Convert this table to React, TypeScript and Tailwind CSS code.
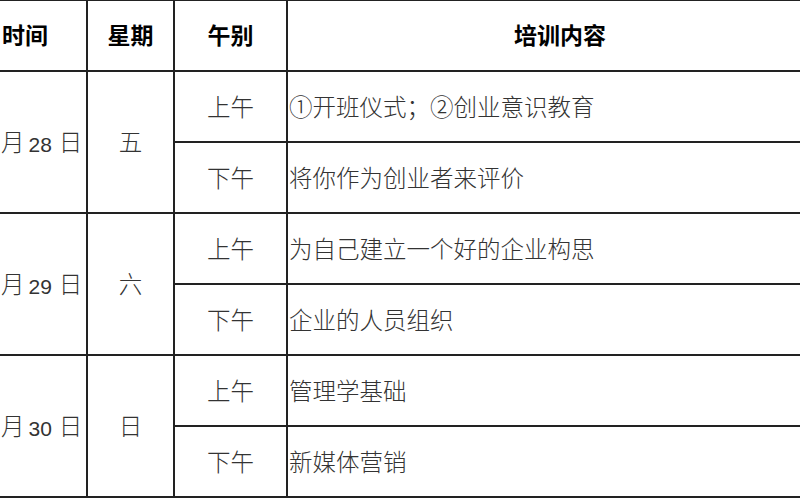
import React from "react";

const body = "text-[23.5px] text-[#333] font-light leading-none pt-[4px]";
const fam = { fontFamily: '"Liberation Sans", "Noto Sans CJK SC", sans-serif' } as React.CSSProperties;

const days = [
  { num: "28", wd: "五", am: "①开班仪式；②创业意识教育", pm: "将你作为创业者来评价" },
  { num: "29", wd: "六", am: "为自己建立一个好的企业构思", pm: "企业的人员组织" },
  { num: "30", wd: "日", am: "管理学基础", pm: "新媒体营销" },
];

export default function App() {
  return (
    <div className="w-[800px] h-[500px] overflow-hidden bg-white" style={fam}>
      <div className="w-[880px] grid grid-cols-[86px_85px_111px_1fr] grid-rows-[69px_69px_69px_69px_69px_69px_69px] gap-[2px] bg-[#222] pt-[1px] pb-[2px]">
        <div className="bg-white flex items-center pl-[2px] pt-[2px] text-[23px] font-bold text-black">时间</div>
        <div className="bg-white flex items-center justify-center pt-[2px] text-[23px] font-bold text-black">星期</div>
        <div className="bg-white flex items-center justify-center pt-[2px] text-[23px] font-bold text-black">午别</div>
        <div className="bg-white flex items-center justify-start pl-[226px] pt-[2px] text-[23px] font-bold text-black">培训内容</div>
        {days.map((d) => (
          <React.Fragment key={d.num}>
            <div className={`bg-white row-span-2 flex items-center pl-[1px] ${body}`}>
              <span>月</span>
              <span className="text-[21px] ml-[4px] mr-[7px]">{d.num}</span>
              <span>日</span>
            </div>
            <div className={`bg-white row-span-2 flex items-center justify-center ${body}`}>{d.wd}</div>
            <div className={`bg-white flex items-center justify-center ${body}`}>上午</div>
            <div className={`bg-white flex items-center pl-[1px] ${body}`}>{d.am}</div>
            <div className={`bg-white flex items-center justify-center ${body}`}>下午</div>
            <div className={`bg-white flex items-center pl-[1px] ${body}`}>{d.pm}</div>
          </React.Fragment>
        ))}
      </div>
    </div>
  );
}
